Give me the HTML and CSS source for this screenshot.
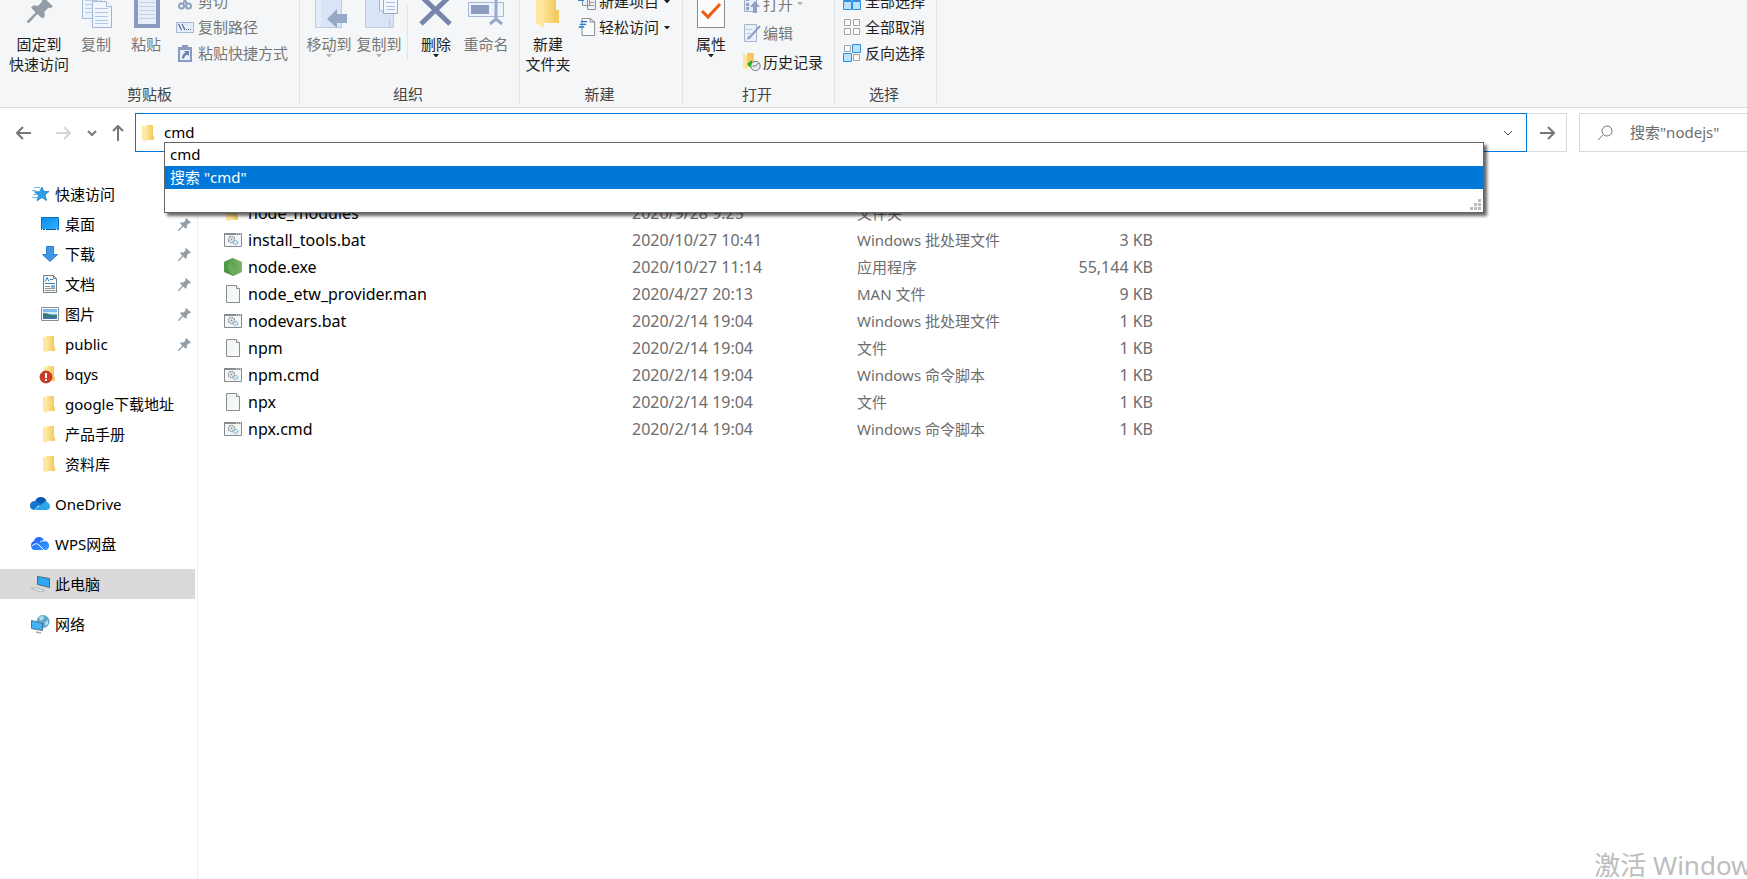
FILE: index.html
```html
<!DOCTYPE html>
<html lang="zh-CN">
<head>
<meta charset="utf-8">
<title>nodejs</title>
<link rel="stylesheet" href="styles.css">
</head>
<body>
<svg class="sprite" aria-hidden="true">
  <defs>
    <linearGradient id="gold" x1="0" x2="1"><stop offset="0" stop-color="#ffe9a6"/><stop offset="1" stop-color="#f4cf66"/></linearGradient>
    <linearGradient id="sky" x1="0" y1="0" x2="1" y2="1"><stop offset="0" stop-color="#0a8bea"/><stop offset="1" stop-color="#35b1ff"/></linearGradient>
    <linearGradient id="paper" x1="0" y1="0" x2="1" y2="1"><stop offset="0" stop-color="#eff1f2"/><stop offset="1" stop-color="#fbfcfc"/></linearGradient>
    <linearGradient id="leaf" x1="0" x2="1"><stop offset="0" stop-color="#43913f"/><stop offset="1" stop-color="#7fb56d"/></linearGradient>
    <linearGradient id="wps" x1="0" y1="0" x2="1" y2="1"><stop offset="0" stop-color="#1a5cff"/><stop offset="1" stop-color="#3ca0ff"/></linearGradient>
  </defs>
  <symbol id="pin" viewBox="0 0 13 13"><path fill="#929da6" d="M8 0 13 4.600 11.700 5.600 10.800 5.300 8.700 7.400 8.900 9.700 7.700 10.800 5.200 8.500 1 13 0 12.800 0 12 4.300 7.700 2 5.300 3.100 4.200 5.600 4.400 7.600 2.300 7.200 1z"/></symbol>
  <symbol id="folder" viewBox="0 0 18 18"><path fill="#f1cd66" d="M5 1h8v11h1v4H5z"/><path fill="url(#gold)" d="M5 1h7v15H5z"/><path fill="#ffe8a3" d="M2 1l4 3v14l-4-2z"/></symbol>
  <symbol id="file" viewBox="0 0 18 18"><path fill="url(#paper)" stroke="#8a8f93" d="M2.500.5h10l3 3v14h-13z"/><path fill="#fff" stroke="#8a8f93" d="M12.500.5v3h3"/></symbol>
  <symbol id="script" viewBox="0 0 18 14"><path fill="#f4f6f7" stroke="#858b90" d="M.5.5h17v13H.5z"/><path stroke="#858b90" stroke-width="2" d="M0 1h18"/><path stroke="#fff" stroke-dasharray="1 1" d="M12 1h5"/><circle cx="7.500" cy="6.500" r="3" fill="none" stroke="#8b9298" stroke-width="1.500" stroke-dasharray="1.500 .8"/><circle cx="7.500" cy="6.500" r="1" fill="#8b9298"/><circle cx="11.500" cy="9.500" r="2" fill="#e9f5fc" stroke="#85b6d4" stroke-width="1.500" stroke-dasharray="1.500 .6"/></symbol>
  <symbol id="node" viewBox="0 0 18 18"><path fill="url(#leaf)" d="M9 0l9 4v10l-9 4-9-4V4z"/><path fill="#4f9b45" d="M9 0 0 4v10l6-11z"/><path fill="#6fae5f" d="M6 3l8 12.800-5 2.200-6-9z" opacity=".7"/></symbol>
  <symbol id="caret" viewBox="0 0 6 3"><path fill="currentColor" d="M0 0h6L3.500 3h-1z"/></symbol>
</svg>

<header class="ribbon">
  <section class="group group-clipboard">
    <div class="tools">
      <button class="big"><svg viewBox="0 0 40 40"><use href="#pin" x="8" y="9" width="26" height="26"/></svg>固定到<br>快速访问</button>
      <button class="big off"><svg viewBox="0 0 40 40"><path fill="#edf3fb" stroke="#a9b9d6" d="M6.500 2.500h18v28h-18z"/><path stroke="#b9cce8" d="M9 12.500h13M9 16.500h13M9 20.500h13M9 24.500h13"/><path fill="#f1f6fd" stroke="#a3b4d4" d="M16.500 13.500h14l5 5v21h-19z"/><path fill="#fff" stroke="#a3b4d4" d="M30.500 13.500v5h5"/><path stroke="#b0c5e4" d="M19 20.500h13M19 24.500h13M19 28.500h13M19 32.500h13M19 35.500h13"/></svg>复制</button>
      <button class="big off"><svg viewBox="0 0 40 40"><path fill="#8a9bbf" d="M8 2h26v38H8z"/><path fill="#e6eefa" d="M12 6h18v30H12z"/><path stroke="#c3d2ea" d="M13 10.500h16M13 14.500h16M13 18.500h16M13 22.500h16M13 26.500h16M13 30.500h16"/></svg>粘贴</button>
      <div class="rows">
        <button class="small off"><svg viewBox="0 0 18 18"><path fill="none" stroke="#8fa0c0" stroke-width="2" d="M5 0l6 12M13 0 7 12"/><circle cx="5.500" cy="14" r="2.500" fill="none" stroke="#8fa0c0" stroke-width="2"/><circle cx="12.500" cy="14" r="2.500" fill="none" stroke="#8fa0c0" stroke-width="2"/></svg>剪切</button>
        <button class="small off"><svg viewBox="0 0 18 18"><path fill="#e4edf9" stroke="#a6b7d5" d="M.5 4.500h17v10H.5z"/><path stroke="#5c6f96" stroke-width="1.300" d="M2.500 6l3 6M6 6l3 6"/><path stroke="#5c6f96" stroke-dasharray="1 1" d="M10 11.500h5"/></svg>复制路径</button>
        <button class="small off"><svg viewBox="0 0 18 18"><path fill="#8a9bbf" d="M2 3h14v15H2zM6 1h6v4H6z"/><path fill="#e8f0fb" d="M4 6h10v10H4z"/><path fill="#6d80aa" d="M8 7h5v5l-1.500-1.500Q8 12 8 15L6 14q0-3.500 3.500-5.500z"/></svg>粘贴快捷方式</button>
      </div>
    </div>
    <h2>剪贴板</h2>
  </section>

  <section class="group group-organize">
    <div class="tools">
      <button class="big off"><svg viewBox="0 0 40 40"><path fill="#d9e5f6" stroke="#bccbe3" d="M6.500 0h26v39.500h-26z"/><path fill="#e3ecf9" d="M7 0h5v39H7z"/><path fill="#98a8c7" d="M18 31 28 21v5h10v9H28v5z"/></svg>移动到<svg class="caret"><use href="#caret"/></svg></button>
      <button class="big off"><svg viewBox="0 0 40 40"><path fill="#d9e5f6" stroke="#bccbe3" d="M6.500 0h28v39.500h-28zM30.500 30v9"/><path fill="#f1f6fd" stroke="#a3b4d4" d="M20.500 2v21h8V2"/><path fill="#f4f8fe" stroke="#98aace" d="M24.500 2v23.500h14V2z"/><path stroke="#a9bfdf" d="M27 10.500h9M27 14.500h9M27 18.500h9M27 21.500h9"/></svg>复制到<svg class="caret"><use href="#caret"/></svg></button>
      <i class="rule"></i>
      <button class="big"><svg viewBox="0 0 40 40"><path stroke="#7585ab" stroke-width="5" d="M5 8l29 28M34 8 5 36"/></svg>删除<svg class="caret"><use href="#caret"/></svg></button>
      <button class="big off"><svg viewBox="0 0 40 40"><path fill="#edf3fc" stroke="#a6b7d5" d="M2.500 14.500h35v14h-35z"/><path fill="#8c9dc0" d="M5 17h18v9H5z"/><path fill="none" stroke="#98a9ca" stroke-width="3" d="M30 5v28M24 36l6-5 6 5"/></svg>重命名</button>
    </div>
    <h2>组织</h2>
  </section>

  <section class="group group-new">
    <div class="tools">
      <button class="big"><svg viewBox="0 0 40 40"><path fill="#f3cc61" d="M16 0h12v22h3v13H12z"/><path fill="url(#gold)" d="M12 0h14v35H12z"/><path fill="#ffe7a0" d="M8 2l8 5v33l-8-5z"/></svg>新建<br>文件夹</button>
      <div class="rows">
        <button class="small"><svg viewBox="0 0 18 18"><path fill="#e9f2fb" stroke="#8795a2" d="M4.500 3.500h7v10h-7zM9.500 7.500h8v10h-8z"/><path stroke="#2c86c9" stroke-width="2" d="M0 8h6"/><path stroke="#d4856f" d="M11 10.500h5M11 13.500h5"/></svg>新建项目<svg class="caret"><use href="#caret"/></svg></button>
        <button class="small"><svg viewBox="0 0 18 20"><path fill="#fafbfc" stroke="#777e84" d="M3.500.5h9l5 4v15h-14z"/><path fill="none" stroke="#777e84" d="M12.500.5v4h5"/><path stroke="#1979ca" stroke-width="1.500" d="M2 4h7M1 7h7M0 10h6"/></svg>轻松访问<svg class="caret"><use href="#caret"/></svg></button>
      </div>
    </div>
    <h2>新建</h2>
  </section>

  <section class="group group-open">
    <div class="tools">
      <button class="big"><svg viewBox="0 0 40 40"><path fill="#fcfcfc" stroke="#8b8b8b" d="M6.500 2.500h20l7 8v29h-27z"/><path fill="none" stroke="#8b8b8b" d="M26.500 2.500v9h7"/><path fill="none" stroke="#f05a14" stroke-width="3" d="M11 23l6 6 12-13"/></svg>属性<svg class="caret"><use href="#caret"/></svg></button>
      <div class="rows loose">
        <button class="small off"><svg viewBox="0 0 18 18"><path fill="#e4edf9" stroke="#9babc9" d="M1.500.5h12v16h-12z"/><path fill="#8fa0c2" d="M3 3h3v3H3zM3 8h3v3H3zM3 12h3v3H3zM8 3h4v2H8zM12 6l5 6h-3v6h-4v-6H7z"/></svg>打开<svg class="caret"><use href="#caret"/></svg></button>
        <button class="small off"><svg viewBox="0 0 18 18"><path fill="#e9f0fa" stroke="#a5b5d0" d="M1.500.5h12v17h-12z"/><path stroke="#b9c8df" d="M3 5.500h6M3 9.500h5"/><path stroke="#8d9ebf" stroke-width="2" d="M17 2 6 14"/><path fill="#8d9ebf" d="M5 12l3 2-4 2z"/></svg>编辑</button>
        <button class="small"><svg viewBox="0 0 18 18"><path fill="#f2cb61" d="M4 0h7v14H4z"/><path fill="#ffe69d" d="M0 0l4 3v14l-4-2z"/><circle cx="12.500" cy="13" r="4.700" fill="#e7ebed" stroke="#757d82"/><path stroke="#6c747a" d="M12.500 13l3-3M12.500 13h-3"/><path fill="#27ad33" d="M9 7v3q-2 2-1 5l-4-4z"/></svg>历史记录</button>
      </div>
    </div>
    <h2>打开</h2>
  </section>

  <section class="group group-select">
    <div class="tools">
      <div class="rows">
        <button class="small"><svg viewBox="0 0 18 18"><path fill="#b9e2ff" stroke="#2e8fe0" d="M.5.500h8v8h-8zM9.500.500h8v8h-8zM.5 9.500h8v8h-8zM9.500 9.500h8v8h-8z"/></svg>全部选择</button>
        <button class="small"><svg viewBox="0 0 18 18"><path fill="#fbfbfb" stroke="#a3a3a3" d="M1.500 1.500h6v6h-6zM10.500 1.500h6v6h-6zM1.500 10.500h6v6h-6zM10.500 10.500h6v6h-6z"/></svg>全部取消</button>
        <button class="small"><svg viewBox="0 0 18 18"><path fill="#fbfbfb" stroke="#a3a3a3" d="M1.500 1.500h6v6h-6zM10.500 10.500h6v6h-6z"/><path fill="#b9e2ff" stroke="#2e8fe0" d="M9.500.500h8v8h-8zM.5 9.500h8v8h-8z"/></svg>反向选择</button>
      </div>
    </div>
    <h2>选择</h2>
  </section>
</header>

<nav class="bar">
  <button class="nav back" aria-label="后退"><svg viewBox="0 0 16 14"><path d="M1 7h14M7 1 1 7l6 6"/></svg></button>
  <button class="nav forward" aria-label="前进" disabled><svg viewBox="0 0 16 14"><path d="M1 7h14M9 1l6 6-6 6"/></svg></button>
  <button class="nav recent" aria-label="最近浏览的位置"><svg viewBox="0 0 10 6"><path d="M1 1l4 4 4-4"/></svg></button>
  <button class="nav up" aria-label="上移"><svg viewBox="0 0 12 16"><path d="M6 16V1M1 6l5-5 5 5"/></svg></button>
  <div class="address">
    <svg class="i18"><use href="#folder"/></svg>
    <input type="text" value="cmd" aria-label="地址">
    <button class="open" aria-label="以前的位置"><svg viewBox="0 0 10 6"><path d="M1 1l4 4 4-4"/></svg></button>
    <ul class="suggest">
      <li><button>cmd</button></li>
      <li><button class="active">搜索 "cmd"</button></li>
      <li class="grip"><svg viewBox="0 0 11 11"><path d="M8 0h3v3H8zM4 4h3v3H4zM8 4h3v3H8zM0 8h3v3H0zM4 8h3v3H4zM8 8h3v3H8z"/></svg></li>
    </ul>
  </div>
  <button class="go" aria-label="转到"><svg viewBox="0 0 16 14"><path d="M1 7h14M9 1l6 6-6 6"/></svg></button>
  <label class="search">
    <svg viewBox="0 0 16 16"><circle cx="10" cy="6" r="5"/><path d="M6.500 9.500 1 15"/></svg>
    <input type="text" placeholder='搜索"nodejs"' aria-label="搜索">
  </label>
</nav>

<main class="body">
  <aside class="tree">
    <a href="#" class="root"><svg class="i20" viewBox="0 0 20 20"><path fill="#2f9fe8" stroke="#1d7fc4" stroke-width=".8" d="M12 3l1.800 4.500H19l-4 3.300 1.500 5.700L12 13.500l-5 3.300 1.500-5.500L4.500 7.800h5z"/><path stroke="#64bdf3" d="M4 3.500h6M2 6.500h4M3 10.500h4M2 13.500h5"/></svg>快速访问</a>
    <a href="#"><svg class="i18" viewBox="0 0 18 18"><path fill="url(#sky)" stroke="#0873c4" d="M.5 2.500h17v12H.5z"/><path stroke="#05599c" d="M1 14.500h16"/><path stroke="#fff" d="M1 14.500h1M4 14.500h1M15 14.500h1"/></svg>桌面<svg class="pin"><use href="#pin"/></svg></a>
    <a href="#"><svg class="i18" viewBox="0 0 18 18"><path fill="#3e97e4" stroke="#2d7fcb" d="M5.500 1.500h7v8h4L9 16.500 1.500 9.500h4z"/></svg>下载<svg class="pin"><use href="#pin"/></svg></a>
    <a href="#"><svg class="i18" viewBox="0 0 18 18"><path fill="#fafbfb" stroke="#777e83" d="M2.500.5h10l3 3v14h-13z"/><path fill="none" stroke="#777e83" d="M12.500.5v3h3"/><path fill="none" stroke="#2a83c6" d="M4 6.500 6 2.500l2 4M9 4.500h3M4 8.500h10M10 11h4M10 12h4"/><path stroke="#92999d" d="M4 11.500h5M4 13.500h10M4 15.500h10"/></svg>文档<svg class="pin"><use href="#pin"/></svg></a>
    <a href="#"><svg class="i18" viewBox="0 0 18 18"><path fill="#fff" stroke="#8a8f94" d="M.5 2.500h17v13H.5z"/><path fill="#7fb9ee" d="M2 4h14v10H2z"/><path fill="#d4e9f7" d="M2 7h14v2H2z"/><path fill="#3d7a6f" d="M2 8q5 0 8 2h6v2H2z"/><path fill="#3d78b5" d="M2 12h14v2H2z"/></svg>图片<svg class="pin"><use href="#pin"/></svg></a>
    <a href="#"><svg class="i18"><use href="#folder"/></svg>public<svg class="pin"><use href="#pin"/></svg></a>
    <a href="#"><svg class="i18 badge" viewBox="0 0 18 18"><use href="#folder" width="18" height="18"/><circle cx="5" cy="12" r="6" fill="#cf3a26" stroke="#a92a1a" stroke-width=".8"/><path stroke="#fff" stroke-width="2" d="M5 8v5M5 14v2"/></svg>bqys</a>
    <a href="#"><svg class="i18"><use href="#folder"/></svg>google下载地址</a>
    <a href="#"><svg class="i18"><use href="#folder"/></svg>产品手册</a>
    <a href="#"><svg class="i18"><use href="#folder"/></svg>资料库</a>
    <a href="#" class="root gap"><svg class="i20" viewBox="0 0 20 20"><path fill="#0a5bb0" d="M5 8Q6 3 11 3q4 0 5.500 4L10 12z"/><path fill="#1279d3" d="M0 12q0-5 5-5 3 0 5 3l-6 6Q0 15 0 12z"/><path fill="#29a7ea" d="M4 16l9-7q3-3 5.500 0 1.500 1 1.500 3.500 0 3.500-4 3.500z"/></svg>OneDrive</a>
    <a href="#" class="root gap"><svg class="i20" viewBox="0 0 20 20"><path fill="url(#wps)" d="M1 11q0-3 3-4 1-4 5-4 4 0 5 4 5 0 5 5 0 4-4 4H5q-4 0-4-5z"/><path fill="none" stroke="#fff" d="M2 12q4-4 7-1l5 5M10 8q2-2 5-1"/></svg>WPS网盘</a>
    <a href="#" class="root gap current"><svg class="i20" viewBox="0 0 20 20"><path fill="#2ea6f2" stroke="#506b7d" d="M7.500 2.500l12 2v9l-12-3z"/><path fill="#e6eaec" stroke="#adb4b8" d="M1 14.500l4-1 10 3-4 1.500z"/></svg>此电脑</a>
    <a href="#" class="root gap"><svg class="i20" viewBox="0 0 20 20"><circle cx="13" cy="7.500" r="6.500" fill="#5ba7cf"/><path fill="#b9dbe8" d="M9 3l4-1 1 3-4 2zM15 8l3-2v4l-3 2z"/><path fill="#3fb2f5" stroke="#4f748c" d="M1.500 6.500l11 3v7l-11-2z"/><path stroke="#9aa7ae" stroke-width="1.500" d="M6 18l5 1"/></svg>网络</a>
  </aside>

  <section class="files">
    <table>
      <colgroup><col class="c-name"><col class="c-date"><col class="c-type"><col class="c-size"></colgroup>
      <tbody>
        <tr><td><svg class="i18"><use href="#folder"/></svg>node_modules</td><td>2020/9/28 9:25</td><td>文件夹</td><td></td></tr>
        <tr><td><svg class="i18"><use href="#script"/></svg>install_tools.bat</td><td>2020/10/27 10:41</td><td>Windows 批处理文件</td><td>3 KB</td></tr>
        <tr><td><svg class="i18"><use href="#node"/></svg>node.exe</td><td>2020/10/27 11:14</td><td>应用程序</td><td>55,144 KB</td></tr>
        <tr><td><svg class="i18"><use href="#file"/></svg>node_etw_provider.man</td><td>2020/4/27 20:13</td><td>MAN 文件</td><td>9 KB</td></tr>
        <tr><td><svg class="i18"><use href="#script"/></svg>nodevars.bat</td><td>2020/2/14 19:04</td><td>Windows 批处理文件</td><td>1 KB</td></tr>
        <tr><td><svg class="i18"><use href="#file"/></svg>npm</td><td>2020/2/14 19:04</td><td>文件</td><td>1 KB</td></tr>
        <tr><td><svg class="i18"><use href="#script"/></svg>npm.cmd</td><td>2020/2/14 19:04</td><td>Windows 命令脚本</td><td>1 KB</td></tr>
        <tr><td><svg class="i18"><use href="#file"/></svg>npx</td><td>2020/2/14 19:04</td><td>文件</td><td>1 KB</td></tr>
        <tr><td><svg class="i18"><use href="#script"/></svg>npx.cmd</td><td>2020/2/14 19:04</td><td>Windows 命令脚本</td><td>1 KB</td></tr>
      </tbody>
    </table>
  </section>
</main>
<p class="watermark">激活 Windows</p>
</body>
</html>
```
FILE: styles.css
```css
* { box-sizing: border-box; }
body {
  margin: 0;
  height: 100vh;
  overflow: hidden;
  display: flex;
  flex-direction: column;
  background: #fff;
  color: #000;
  font: 15px/20px "Noto Sans", "Noto Sans CJK SC", sans-serif;
}
.sprite { position: absolute; width: 0; height: 0; }
button, input { font: inherit; color: inherit; border: 0; background: none; padding: 0; margin: 0; }
svg { display: block; flex: none; }
.i18 { width: 18px; height: 18px; }
.i20 { width: 20px; height: 20px; }
.badge { overflow: visible; }
.caret { width: 6px; height: 3px; }

.ribbon {
  display: flex;
  margin-top: -24px;
  background: #f5f6f7;
  border-bottom: 1px solid #dadbdc;
  color: #1e1e1e;
}
.group {
  display: flex;
  flex-direction: column;
  border-right: 1px solid #e2e3e4;
  margin-bottom: 3px;
}
.group h2 {
  margin: 0;
  padding-right: 3px;
  font-size: 15px;
  font-weight: 400;
  text-align: center;
  color: #444;
}
.group-clipboard { width: 300px; }
.group-organize { width: 220px; }
.group-new { width: 163px; }
.group-open { width: 152px; }
.group-select { width: 102px; }
.tools { display: flex; height: 108px; padding: 12px 4px 0; }
.big {
  display: flex;
  flex-direction: column;
  align-items: center;
  min-width: 50px;
  padding: 0 2px;
  white-space: nowrap;
}
.big svg:first-child { width: 40px; height: 40px; margin-bottom: 6px; }
.off { color: #767676; }
.off .caret { color: #b4b4b4; }
.rule { width: 1px; height: 55px; margin: 17px 3px 0; background: #e2e3e4; }
.rows { display: flex; flex-direction: column; margin-left: 6px; }
.small { display: flex; align-items: center; gap: 4px; height: 26px; white-space: nowrap; }
.small svg:first-child { width: 18px; height: 18px; }
.small .caret { margin-left: 2px; }
.loose { padding-top: 1px; }
.loose .small { height: 29px; gap: 2px; }
.group-clipboard h2 { padding-right: 0; }
.group-clipboard .tools { padding-left: 7px; }
.group-clipboard .rows { margin-left: 5px; }
.group-new .tools, .group-open .tools { padding-left: 3px; }
.group-new .rows { margin-left: 5px; }
.group-new .small { gap: 3px; }
.group-open .rows { margin-left: 7px; }
.group-select .rows { margin-left: 4px; }

/* Navigation and address bar */
.bar { display: flex; align-items: center; height: 44px; padding-top: 5px; }
.bar svg path, .bar svg circle { fill: none; stroke: #767676; stroke-width: 2; }
.nav { display: grid; place-items: center; height: 39px; }
.back { width: 48px; }
.forward { width: 30px; }
.recent { width: 28px; }
.up { width: 23px; }
.back svg, .forward svg, .go svg { width: 16px; height: 14px; }
.recent svg, .open svg { width: 10px; height: 6px; }
.up svg { width: 12px; height: 16px; }
.bar .forward svg path { stroke: #d6d6d6; }
.address {
  position: relative;
  flex: 1;
  display: flex;
  align-items: center;
  height: 39px;
  margin-left: 6px;
  padding-left: 5px;
  border: 1px solid #0078d7;
}
.address input, .search input { padding-bottom: 2px; outline: none; }
.address input { flex: 1; margin-left: 5px; }
.address .i18 { margin-left: -1px; margin-right: 1px; }
.open { display: grid; place-items: center; width: 37px; height: 37px; }
.bar .open svg path { stroke: #444; stroke-width: 1; }
.suggest {
  position: absolute;
  z-index: 2;
  top: 28px;
  left: 28px;
  right: 42px;
  margin: 0;
  padding: 0;
  list-style: none;
  background: #fff;
  border: 1px solid #666;
  box-shadow: 3px 3px 3px rgba(0, 0, 0, .6);
}
.suggest button { display: block; width: 100%; height: 23px; padding: 0 5px 2px; text-align: left; }
.suggest .active { background: #0078d7; color: #fff; }
.grip { display: flex; justify-content: flex-end; align-items: flex-end; height: 23px; padding: 2px; }
.grip svg { width: 11px; height: 11px; }
.bar .grip svg path { fill: #bcbcbc; stroke: none; }
.go { display: grid; place-items: center; width: 40px; height: 39px; border: 1px solid #d9d9d9; border-left: 0; }
.search {
  display: flex;
  align-items: center;
  gap: 17px;
  width: 168px;
  height: 39px;
  margin-left: 12px;
  padding-left: 17px;
  border: 1px solid #d9d9d9;
  border-right: 0;
}
.search svg { width: 16px; height: 16px; }
.bar .search svg * { stroke-width: 1; }
.search input { flex: 1; min-width: 0; }
.search input::placeholder { color: #6d6d6d; opacity: 1; }

/* Folder tree and file list */
.body { flex: 1; display: flex; min-height: 0; }
.tree { width: 198px; padding: 27px 2px 0 0; border-right: 1px solid #f0f0f0; }
.tree a {
  display: flex;
  align-items: center;
  gap: 6px;
  height: 30px;
  padding-left: 41px;
  color: #000;
  text-decoration: none;
}
.tree .root { gap: 5px; padding-left: 30px; }
.tree .gap { margin-top: 10px; }
.tree .current { background: #d9d9d9; }
.pin { width: 13px; height: 13px; margin-left: auto; margin-right: 4px; }
.files { flex: 1; padding: 47px 0 0 26px; }
table { border-collapse: collapse; table-layout: fixed; width: 929px; }
.c-name { width: 408px; }
.c-date { width: 225px; }
.c-type { width: 196px; }
.c-size { width: 100px; }
td { height: 27px; padding: 0; font-size: 16px; white-space: nowrap; color: #6d6d6d; }
td:first-child { display: flex; align-items: center; gap: 6px; color: #000; }
td:nth-child(3) { font-size: 15px; }
td:last-child { text-align: right; }

.watermark {
  position: absolute;
  right: -17px;
  bottom: -1px;
  margin: 0;
  font-size: 26px;
  line-height: 30px;
  color: #bdbdbd;
}
```
